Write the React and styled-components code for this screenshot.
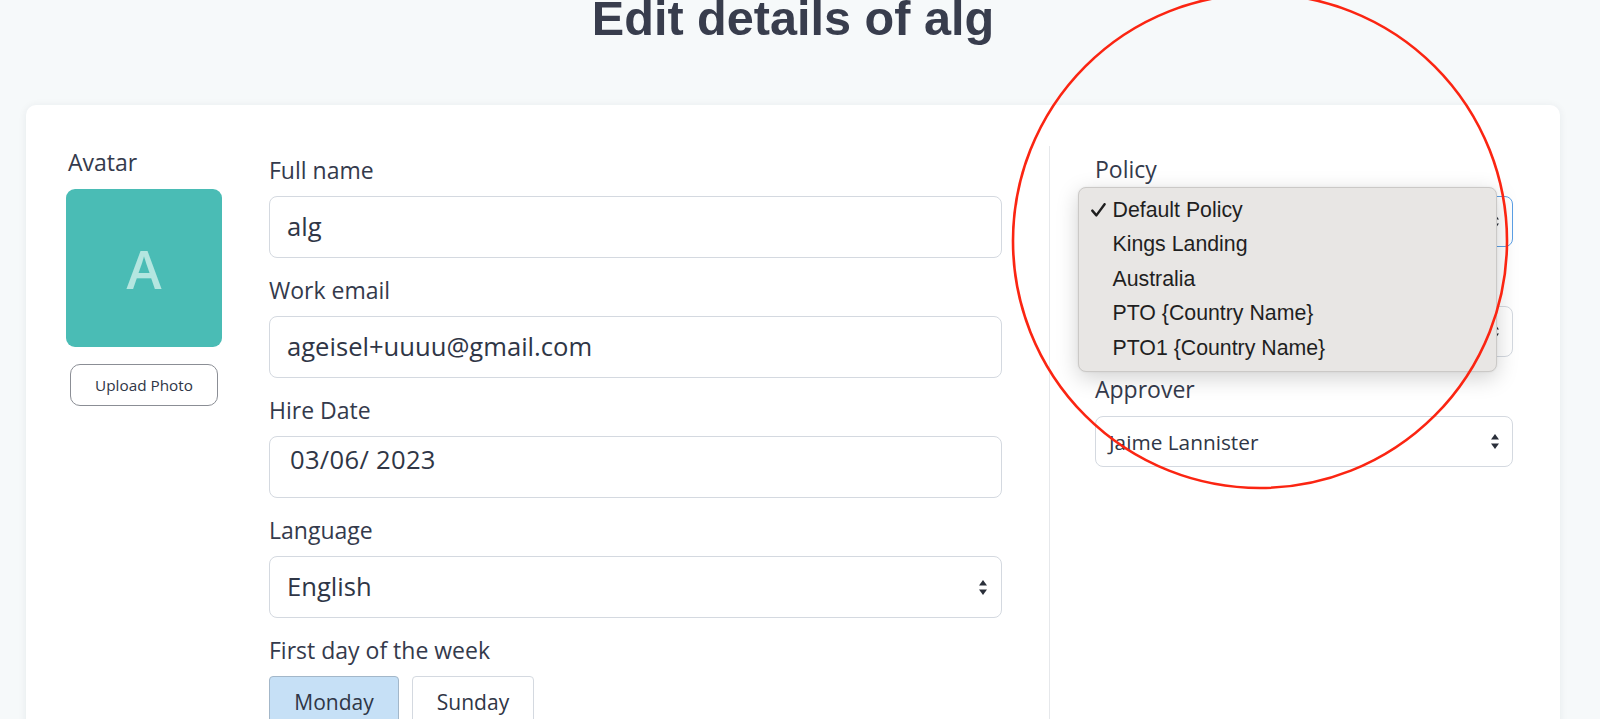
import React from "react";
import styled, { createGlobalStyle } from "styled-components";

const GlobalStyle = createGlobalStyle`
  html, body {
    margin: 0;
    padding: 0;
    overflow: hidden;
    background: #f6f9fa;
  }
  body {
    font-family: "Open Sans", "Noto Sans", sans-serif;
    color: #343a4c;
  }
`;

const Root = styled.div`
  position: relative;
  min-height: 100vh;
`;

const Page = styled.main`
  width: 1534px;
  margin-left: 26px;
`;

const Title = styled.h1`
  margin: 0;
  text-align: center;
  font-family: "Liberation Sans", Arial, sans-serif;
  font-weight: 700;
  font-size: 48.6px;
  line-height: 37px;
  color: #383d4d;
`;

const Card = styled.section`
  margin-top: 68px;
  background: #ffffff;
  border-radius: 10px;
  box-shadow: 0 1px 8px rgba(30, 40, 60, 0.07);
  display: flex;
  align-items: stretch;
  padding: 41px 0 80px 40px;
`;

const AvatarColumn = styled.div`
  width: 156px;
  flex: none;
  display: flex;
  flex-direction: column;
  align-items: center;
  padding-top: 1px;
`;

const Label = styled.div`
  font-size: 23px;
  line-height: 30px;
  color: #343a4c;
  margin-bottom: ${(p) => p.$gap ?? 11}px;
  align-self: stretch;
  padding-left: ${(p) => p.$indent ?? 0}px;
`;

const AvatarBox = styled.div`
  width: 156px;
  height: 158px;
  border-radius: 9px;
  background: #4abcb5;
  display: flex;
  align-items: center;
  justify-content: center;
`;

const AvatarLetter = styled.span`
  font-size: 53px;
  font-weight: 600;
  color: #b4e6e0;
  line-height: 1;
`;

const UploadButton = styled.button`
  margin-top: 17px;
  width: 148px;
  height: 42px;
  border: 1px solid #8b8e95;
  border-radius: 10px;
  background: #ffffff;
  font-family: "Open Sans", sans-serif;
  font-size: 15.3px;
  color: #2f3646;
  padding: 0;
`;

const FormColumn = styled.div`
  width: 733px;
  flex: none;
  margin-left: 47px;
  padding-top: 9px;
`;

const Field = styled.div`
  margin-bottom: ${(p) => p.$after ?? 17}px;
`;

const Box = styled.div`
  box-sizing: border-box;
  height: ${(p) => p.$h}px;
  border: 1px solid ${(p) => (p.$focus ? "#5b9fe6" : "#d4d9e0")};
  border-radius: 8px;
  background: #ffffff;
  display: flex;
  align-items: ${(p) => (p.$top ? "flex-start" : "center")};
  padding: ${(p) => (p.$top ? "6px" : "0")} ${(p) => p.$right ?? 14}px 0 ${(p) => p.$left ?? 17}px;
  font-size: ${(p) => p.$size}px;
  line-height: 34px;
  color: #2f3646;
`;

const BoxText = styled.span`
  flex: 1;
  white-space: nowrap;
`;

const DateText = styled.span`
  flex: 1;
  white-space: nowrap;
  padding-left: 3px;
  letter-spacing: 0.3px;
`;

const Arrows = () => (
  <svg width="8" height="15" viewBox="0 0 8 15">
    <polygon points="4,0 8,5.5 0,5.5" fill="#2a2f3a" />
    <polygon points="0,9.5 8,9.5 4,15" fill="#2a2f3a" />
  </svg>
);

const WeekRow = styled.div`
  display: flex;
  gap: 13px;
`;

const DayButton = styled.button`
  box-sizing: border-box;
  width: ${(p) => p.$w}px;
  height: 52px;
  border-radius: 4px;
  border: 1px solid ${(p) => (p.$active ? "#a3b7c9" : "#d4d9e0")};
  background: ${(p) => (p.$active ? "#c6e0f6" : "#ffffff")};
  font-family: "Open Sans", sans-serif;
  font-size: 21px;
  color: #2f3646;
  padding: 0;
`;

const SideColumn = styled.div`
  flex: 1;
  margin-left: 47px;
  border-left: 1px solid #e6e8eb;
  padding: 8px 47px 0 45px;
`;

const SideField = styled.div`
  position: relative;
  margin-bottom: 17px;
`;

const SelectAnchor = styled.div`
  position: relative;
`;

const Menu = styled.ul`
  position: absolute;
  left: -17px;
  top: -9px;
  z-index: 5;
  box-sizing: border-box;
  width: 419px;
  height: 185px;
  margin: 0;
  padding: 5px 0 0 0;
  list-style: none;
  background: #e8e6e4;
  border: 1px solid #cbc9c7;
  border-radius: 8px;
  box-shadow: 0 6px 22px rgba(0, 0, 0, 0.18), 0 0 2px rgba(0, 0, 0, 0.08);
`;

const MenuItem = styled.li`
  display: flex;
  align-items: center;
  height: 34.5px;
  padding-left: 12px;
  font-family: "Liberation Sans", Arial, sans-serif;
  font-size: 21.3px;
  color: #1f1f1f;
`;

const CheckSlot = styled.span`
  width: 21.5px;
  flex: none;
  display: flex;
  align-items: center;
`;

const CheckMark = () => (
  <svg width="15" height="14" viewBox="0 0 15 14">
    <path d="M1.3 7.6 L5.4 12.4 L13.6 1.2" fill="none" stroke="#1f1f1f" strokeWidth="2.4" strokeLinecap="round" strokeLinejoin="round" />
  </svg>
);

const Annotation = styled.svg`
  position: absolute;
  left: 0;
  top: 0;
  pointer-events: none;
  z-index: 10;
`;

const policies = [
  "Default Policy",
  "Kings Landing",
  "Australia",
  "PTO {Country Name}",
  "PTO1 {Country Name}",
];

export default function App() {
  return (
    <Root>
      <GlobalStyle />
      <Page>
        <Title>Edit details of alg</Title>
        <Card>
          <AvatarColumn>
            <Label $gap={12} $indent={2}>Avatar</Label>
            <AvatarBox>
              <AvatarLetter>A</AvatarLetter>
            </AvatarBox>
            <UploadButton>Upload Photo</UploadButton>
          </AvatarColumn>

          <FormColumn>
            <Field>
              <Label>Full name</Label>
              <Box $h={62} $size={25.6}>
                <BoxText>alg</BoxText>
              </Box>
            </Field>
            <Field>
              <Label>Work email</Label>
              <Box $h={62} $size={25.6}>
                <BoxText>ageisel+uuuu@gmail.com</BoxText>
              </Box>
            </Field>
            <Field>
              <Label>Hire Date</Label>
              <Box $h={62} $size={25.6} $top>
                <DateText>03/06/ 2023</DateText>
              </Box>
            </Field>
            <Field>
              <Label>Language</Label>
              <Box $h={62} $size={25.6}>
                <BoxText>English</BoxText>
                <Arrows />
              </Box>
            </Field>
            <Field>
              <Label>First day of the week</Label>
              <WeekRow>
                <DayButton $w={130} $active>Monday</DayButton>
                <DayButton $w={122}>Sunday</DayButton>
              </WeekRow>
            </Field>
          </FormColumn>

          <SideColumn>
            <SideField>
              <Label $gap={12}>Policy</Label>
              <SelectAnchor>
                <Box $h={51} $size={20.8} $left={13} $right={13} $focus>
                  <BoxText>Default Policy</BoxText>
                  <Arrows />
                </Box>
                <Menu>
                  {policies.map((p, i) => (
                    <MenuItem key={p}>
                      <CheckSlot>{i === 0 ? <CheckMark /> : null}</CheckSlot>
                      {p}
                    </MenuItem>
                  ))}
                </Menu>
              </SelectAnchor>
            </SideField>
            <SideField>
              <Label $gap={12}>Team</Label>
              <Box $h={51} $size={20.8} $left={13} $right={13}>
                <BoxText>No team</BoxText>
                <Arrows />
              </Box>
            </SideField>
            <SideField>
              <Label $gap={12}>Approver</Label>
              <Box $h={51} $size={20.8} $left={13} $right={13}>
                <BoxText>Jaime Lannister</BoxText>
                <Arrows />
              </Box>
            </SideField>
          </SideColumn>
        </Card>
      </Page>
      <Annotation width="1600" height="719" viewBox="0 0 1600 719">
        <circle cx="1260" cy="241" r="247" fill="none" stroke="#fb2512" strokeWidth="2.6" />
      </Annotation>
    </Root>
  );
}
